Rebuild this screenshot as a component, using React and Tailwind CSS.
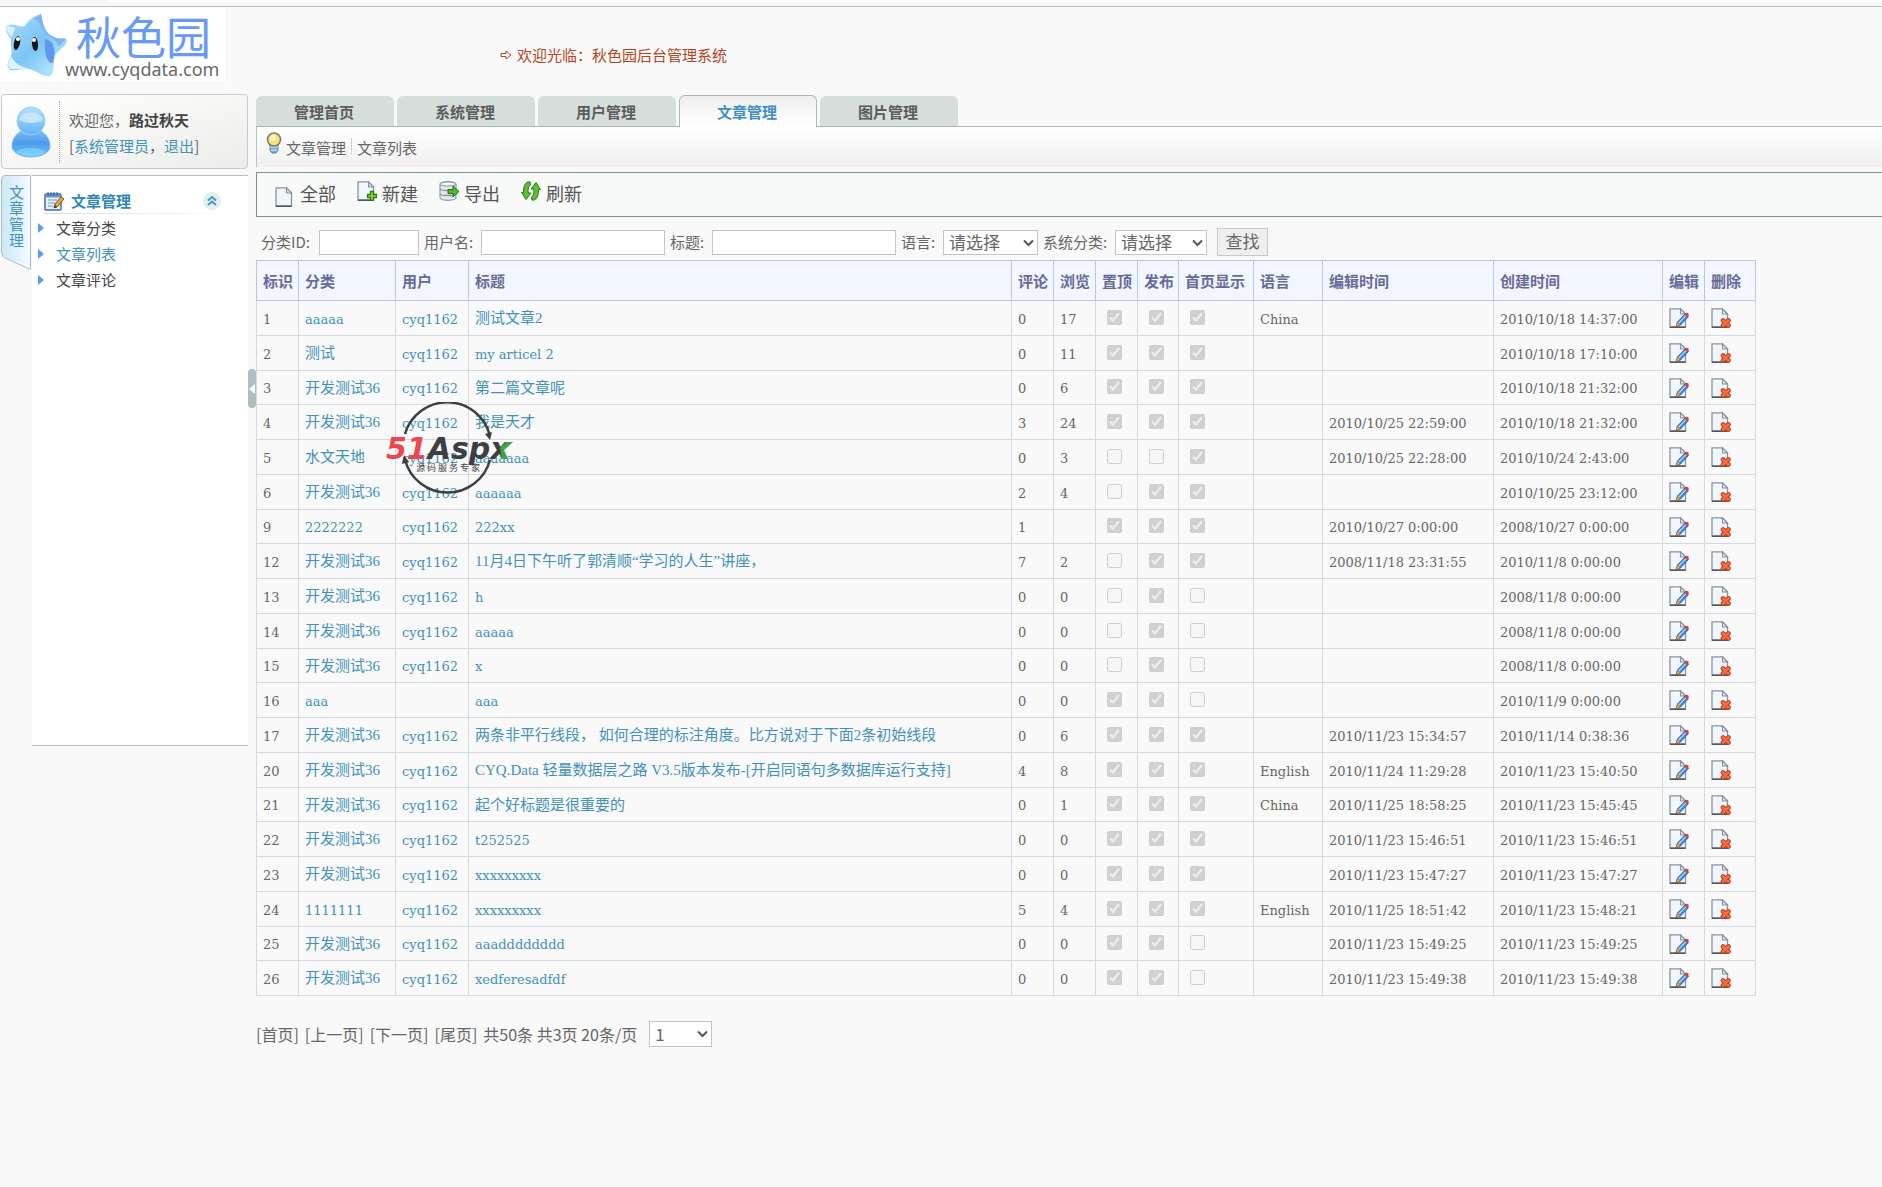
import React, { useState } from 'react';

const tabs = ['管理首页', '系统管理', '用户管理', '文章管理', '图片管理'];

const menuItems = ['文章分类', '文章列表', '文章评论'];

// top / pub / home are the three checkbox columns
const articles = [
    { id: 1, cat: 'aaaaa', user: 'cyq1162', title: '测试文章2', comments: '0', hits: '17', top: true, pub: true, home: true, lang: 'China', edited: '', created: '2010/10/18 14:37:00' },
    { id: 2, cat: '测试', user: 'cyq1162', title: 'my articel 2', comments: '0', hits: '11', top: true, pub: true, home: true, lang: '', edited: '', created: '2010/10/18 17:10:00' },
    { id: 3, cat: '开发测试36', user: 'cyq1162', title: '第二篇文章呢', comments: '0', hits: '6', top: true, pub: true, home: true, lang: '', edited: '', created: '2010/10/18 21:32:00' },
    { id: 4, cat: '开发测试36', user: 'cyq1162', title: '我是天才', comments: '3', hits: '24', top: true, pub: true, home: true, lang: '', edited: '2010/10/25 22:59:00', created: '2010/10/18 21:32:00' },
    { id: 5, cat: '水文天地', user: 'cyq1162', title: 'aaaaaaa', comments: '0', hits: '3', top: false, pub: false, home: true, lang: '', edited: '2010/10/25 22:28:00', created: '2010/10/24 2:43:00' },
    { id: 6, cat: '开发测试36', user: 'cyq1162', title: 'aaaaaa', comments: '2', hits: '4', top: false, pub: true, home: true, lang: '', edited: '', created: '2010/10/25 23:12:00' },
    { id: 9, cat: '2222222', user: 'cyq1162', title: '222xx', comments: '1', hits: '', top: true, pub: true, home: true, lang: '', edited: '2010/10/27 0:00:00', created: '2008/10/27 0:00:00' },
    { id: 12, cat: '开发测试36', user: 'cyq1162', title: '11月4日下午听了郭清顺“学习的人生”讲座，', comments: '7', hits: '2', top: false, pub: true, home: true, lang: '', edited: '2008/11/18 23:31:55', created: '2010/11/8 0:00:00' },
    { id: 13, cat: '开发测试36', user: 'cyq1162', title: 'h', comments: '0', hits: '0', top: false, pub: true, home: false, lang: '', edited: '', created: '2008/11/8 0:00:00' },
    { id: 14, cat: '开发测试36', user: 'cyq1162', title: 'aaaaa', comments: '0', hits: '0', top: false, pub: true, home: false, lang: '', edited: '', created: '2008/11/8 0:00:00' },
    { id: 15, cat: '开发测试36', user: 'cyq1162', title: 'x', comments: '0', hits: '0', top: false, pub: true, home: false, lang: '', edited: '', created: '2008/11/8 0:00:00' },
    { id: 16, cat: 'aaa', user: '', title: 'aaa', comments: '0', hits: '0', top: true, pub: true, home: false, lang: '', edited: '', created: '2010/11/9 0:00:00' },
    { id: 17, cat: '开发测试36', user: 'cyq1162', title: '两条非平行线段， 如何合理的标注角度。比方说对于下面2条初始线段', comments: '0', hits: '6', top: true, pub: true, home: true, lang: '', edited: '2010/11/23 15:34:57', created: '2010/11/14 0:38:36' },
    { id: 20, cat: '开发测试36', user: 'cyq1162', title: 'CYQ.Data 轻量数据层之路 V3.5版本发布-[开启同语句多数据库运行支持]', comments: '4', hits: '8', top: true, pub: true, home: true, lang: 'English', edited: '2010/11/24 11:29:28', created: '2010/11/23 15:40:50' },
    { id: 21, cat: '开发测试36', user: 'cyq1162', title: '起个好标题是很重要的', comments: '0', hits: '1', top: true, pub: true, home: true, lang: 'China', edited: '2010/11/25 18:58:25', created: '2010/11/23 15:45:45' },
    { id: 22, cat: '开发测试36', user: 'cyq1162', title: 't252525', comments: '0', hits: '0', top: true, pub: true, home: true, lang: '', edited: '2010/11/23 15:46:51', created: '2010/11/23 15:46:51' },
    { id: 23, cat: '开发测试36', user: 'cyq1162', title: 'xxxxxxxxx', comments: '0', hits: '0', top: true, pub: true, home: true, lang: '', edited: '2010/11/23 15:47:27', created: '2010/11/23 15:47:27' },
    { id: 24, cat: '1111111', user: 'cyq1162', title: 'xxxxxxxxx', comments: '5', hits: '4', top: true, pub: true, home: true, lang: 'English', edited: '2010/11/25 18:51:42', created: '2010/11/23 15:48:21' },
    { id: 25, cat: '开发测试36', user: 'cyq1162', title: 'aaadddddddd', comments: '0', hits: '0', top: true, pub: true, home: false, lang: '', edited: '2010/11/23 15:49:25', created: '2010/11/23 15:49:25' },
    { id: 26, cat: '开发测试36', user: 'cyq1162', title: 'xedferesadfdf', comments: '0', hits: '0', top: true, pub: true, home: false, lang: '', edited: '2010/11/23 15:49:38', created: '2010/11/23 15:49:38' },
];

const columns = [
    { label: '标识', width: 'w-[42px]' },
    { label: '分类', width: 'w-[97px]' },
    { label: '用户', width: 'w-[73px]' },
    { label: '标题', width: 'w-auto' },
    { label: '评论', width: 'w-[42px]' },
    { label: '浏览', width: 'w-[42px]' },
    { label: '置顶', width: 'w-[42px]' },
    { label: '发布', width: 'w-[41px]' },
    { label: '首页显示', width: 'w-[75px]' },
    { label: '语言', width: 'w-[69px]' },
    { label: '编辑时间', width: 'w-[171px]' },
    { label: '创建时间', width: 'w-[169px]' },
    { label: '编辑', width: 'w-[42px]' },
    { label: '删除', width: 'w-[51px]' },
];

const StarLogo = () => (
    <svg width="64" height="66" viewBox="0 0 64 66" aria-hidden="true" className="shrink-0">
        <defs>
            <linearGradient id="star" x1="0" y1="0" x2="1" y2="1">
                <stop offset="0" stopColor="#a9dcfa" />
                <stop offset="0.5" stopColor="#7cc4f6" />
                <stop offset="1" stopColor="#c9f3fd" />
            </linearGradient>
        </defs>
        <path d="M37 2C30 4 25 7 21 14C16 16 11 11 5 13C0 14 2 21 7 27C6 34 9 38 7 44C3 51 2 55 7 58C14 59 19 56 25 57C33 59 40 66 46 64C51 61 49 54 50 46C51 40 63 34 63 29C62 24 56 28 50 25C41 22 39 13 37 2Z" fill="url(#star)" />
        <path d="M37 2C39 13 41 22 50 25C54 28 58 26 62 27L55 34C51 26 43 24 38 16C36 11 34 8 30 7Z" fill="#7fb2f4" />
        <path d="M41 27C49 28 53 37 49 51C42 51 40 40 41 27Z" fill="#6197f4" />
        <path d="M5 14C1 15 3 21 8 25L11 16ZM7 44C3 51 3 56 8 57C14 58 19 56 25 57C16 54 10 51 7 44Z" fill="#d9f4fd" />
        <ellipse cx="13" cy="31" rx="3" ry="7" transform="rotate(12 13 31)" fill="#141414" />
        <ellipse cx="31" cy="32" rx="3" ry="7" transform="rotate(-6 31 32)" fill="#141414" />
        <circle cx="14" cy="27" r="2" fill="#fff" />
        <circle cx="30" cy="28" r="2" fill="#fff" />
    </svg>
);

const AvatarIcon = () => (
    <svg width="40" height="52" viewBox="0 0 40 52" aria-hidden="true">
        <defs>
            <linearGradient id="avatarHead" x1="0" y1="0" x2="0" y2="1">
                <stop offset="0" stopColor="#b5e1fb" />
                <stop offset="0.5" stopColor="#8ccaf8" />
                <stop offset="1" stopColor="#64b2f5" />
            </linearGradient>
            <linearGradient id="avatarBody" x1="0" y1="0" x2="0" y2="1">
                <stop offset="0" stopColor="#83c4f8" />
                <stop offset="0.5" stopColor="#4b9bec" />
                <stop offset="1" stopColor="#6cc9fb" />
            </linearGradient>
        </defs>
        <path d="M1 41C1 30 9 23 20 23C31 23 39 30 39 41C38 47 30 51 20 51C10 51 2 47 1 41Z" fill="url(#avatarBody)" stroke="#78b8ec" />
        <ellipse cx="20" cy="46" rx="14" ry="4" fill="#8be0fd" opacity="0.5" />
        <circle cx="20" cy="15" r="14" fill="url(#avatarHead)" stroke="#9bcdf0" />
        <path d="M8 14C10 4 30 4 32 14C25 18 15 18 8 14Z" fill="#d5effd" opacity="0.7" />
    </svg>
);

const NoteIcon = () => (
    <svg width="20" height="20" viewBox="0 0 20 20" aria-hidden="true">
        <rect x="1" y="3" width="16" height="16" rx="1" fill="#eaf2fd" stroke="#4268ae" strokeWidth="1.5" />
        <path d="M1 5h16" stroke="#6b94d6" strokeWidth="3" />
        <path d="M4 1v4M7 1v4M10 1v4M13 1v4" stroke="#35599f" />
        <path d="M4 9h9M4 12h7M4 15h5" stroke="#6c94d8" />
        <path d="M10 17L11 13L17 6L20 8L13 16Z" fill="#e8a63a" stroke="#8a5419" />
        <path d="M10 17L11 14L13 16Z" fill="#333" />
    </svg>
);

const CollapseIcon = () => (
    <svg width="20" height="20" viewBox="0 0 20 20" aria-hidden="true">
        <circle cx="10" cy="10" r="9" fill="#e3f0e7" />
        <path d="M6 9.5L10 6L14 9.5M6 14L10 10.5L14 14" fill="none" stroke="#4798c4" strokeWidth="2" />
    </svg>
);

const BulbIcon = () => (
    <svg width="16" height="22" viewBox="0 0 16 22" aria-hidden="true">
        <path d="M4 12h8v6l-2 3H6l-2-3Z" fill="#7ab0d8" stroke="#5b7f9c" />
        <path d="M4 15h8M5 18h6" stroke="#d5e9f6" />
        <circle cx="8" cy="7.5" r="6.5" fill="#f6e27a" stroke="#84796a" strokeWidth="1.5" />
        <circle cx="7" cy="6" r="3" fill="#fdf6bd" />
    </svg>
);

// shared sheet of paper, the small icons are drawn on top of it
const PageIcon = ({ children }) => (
    <svg width="20" height="20" viewBox="0 0 20 20" aria-hidden="true">
        <path d="M1 .8h10.500L16.500 6v13.2H1Z" fill="#f1f6fc" stroke="#8a929e" strokeWidth="1.3" />
        <path d="M1 19.200h15.500" stroke="#4c535c" strokeWidth="1.5" />
        <path d="M11.500 .8V6h5Z" fill="#dde4ee" stroke="#8a929e" strokeWidth="1.1" />
        {children}
    </svg>
);

const AddIcon = () => (
    <PageIcon>
        <path d="M10.500 13.500h3v-3h3v3h3v3h-3v3h-3v-3h-3Z" fill="#8fd83a" stroke="#2f7d12" strokeWidth="1.3" />
    </PageIcon>
);

const EditIcon = () => (
    <PageIcon>
        <path d="M7 19L8.500 14L16.500 5.500L19.500 8.500L11.500 17Z" fill="#3f83e0" stroke="#2c549b" strokeWidth="0.8" />
        <path d="M8.800 15L16.500 7L17.500 8L10 16Z" fill="#a8d1fb" />
        <path d="M15.500 6.500L17 5C18.500 4 20.500 6 19.500 7.500L18.300 9.200Z" fill="#d8403c" />
        <path d="M7 19L8.500 14.200L11.400 17Z" fill="#edb55a" stroke="#8a6021" strokeWidth="0.6" />
    </PageIcon>
);

const DeleteIcon = () => (
    <PageIcon>
        <path d="M12 12.500L17.500 17.500M17.500 12.500L12 17.500" fill="none" stroke="#c43a17" strokeWidth="4.600" strokeLinecap="round" />
        <path d="M12 12.500L17.500 17.500M17.500 12.500L12 17.500" fill="none" stroke="#f27048" strokeWidth="2.600" strokeLinecap="round" />
    </PageIcon>
);

const ExportIcon = () => (
    <svg width="20" height="20" viewBox="0 0 20 20" aria-hidden="true">
        <path d="M1 3C1 0 17 0 17 3V17C17 20 1 20 1 17Z" fill="#e3e9f0" stroke="#858e9a" />
        <ellipse cx="9" cy="3" rx="8" ry="2" fill="#f8fafc" stroke="#858e9a" />
        <path d="M1 8C1 10 17 10 17 8M1 13C1 15 17 15 17 13" fill="none" stroke="#858e9a" strokeWidth="1.3" />
        <path d="M9 8.500h5V5l6 5.500L14 16v-3.500H9Z" fill="#58b52b" stroke="#267010" />
    </svg>
);

const RefreshIcon = () => (
    <svg width="20" height="20" viewBox="0 0 20 20" aria-hidden="true">
        <path d="M9 .8C4.500 .8 2.500 4 2.500 11.500H.6L5 18.500L10 12H7.300C6.800 8 7 5 9.500 4Z" fill="#62bd32" stroke="#2c7a14" />
        <path d="M11 19.200C15.500 19.200 17.500 16 17.500 8.500H19.400L15 1.500L10 8H12.700C13.200 12 13 15 10.500 16Z" fill="#62bd32" stroke="#2c7a14" />
    </svg>
);

const toolbar = [
    { label: '全部', icon: <PageIcon />, align: 'pt-[8px]' },
    { label: '新建', icon: <AddIcon />, align: 'pb-[4px]' },
    { label: '导出', icon: <ExportIcon />, align: 'pb-[4px]' },
    { label: '刷新', icon: <RefreshIcon />, align: 'pb-[4px]' },
];

const Watermark = () => (
    <svg className="absolute left-[130px] top-[142px] pointer-events-none" width="128" height="94" viewBox="0 0 128 94" aria-label="51Aspx">
        <path d="M19 32A44 44 0 0 1 104 34M104 58A44 44 0 0 1 19 58" fill="none" stroke="#3d3f42" strokeWidth="2.500" />
        <path d="M99 32L106 30L104 38ZM16 62L18 53L23 60Z" fill="#3d3f42" />
        <text x="0" y="57" fontSize="30" fontWeight="bold" fontStyle="italic" fontFamily="DejaVu Sans, sans-serif">
            <tspan fill="#ef4550">51</tspan>
            <tspan fill="#3d3f42">Aspx</tspan>
        </text>
        <path d="M114 46L120 40H127L118 48L122 57H116Z" fill="#39a544" />
        <text x="30" y="69" fontSize="9" fill="#3d3f42" fontFamily="Noto Sans CJK SC, sans-serif">源 码 服 务 专 家</text>
    </svg>
);

const Select = ({ className, options, ...props }) => (
    <span className="relative inline-flex">
        <select {...props} className={`${className} pl-[5px] appearance-none bg-white border border-[#c4c4c4] text-[17px] leading-5`}>
            {options.map((option) => <option key={option}>{option}</option>)}
        </select>
        <svg className="absolute right-[4px] top-[9px] pointer-events-none" width="11" height="8" viewBox="0 0 11 8" aria-hidden="true">
            <path d="M1 1.500L5.500 6L10 1.500" fill="none" stroke="#555" strokeWidth="2" />
        </svg>
    </span>
);

const Cell = ({ text, link }) => {
    const hasCjk = /[\u4e00-\u9fff]/.test(text);
    return (
        <td className={`border border-[#d3d9df] px-[6px] whitespace-nowrap ${hasCjk ? "text-[15px] font-['Liberation_Serif','Noto_Sans_CJK_SC',serif]" : "pt-[3px] text-[13px] font-['DejaVu_Serif',serif]"}`}>
            {link ? <a href="#" className="text-[#4292b8] hover:underline">{text}</a> : text}
        </td>
    );
};

const CheckCell = ({ checked, label }) => (
    <td className="border border-[#d3d9df] pl-[11px] pb-[2px]">
        <input type="checkbox" checked={checked} disabled readOnly aria-label={label} className="block w-[15px] h-[15px]" />
    </td>
);

const Sidebar = () => (
    <aside className="w-[248px] shrink-0">
        <div className="flex items-center h-[75px] ml-px border border-[#c6cbca] rounded bg-linear-to-br from-white via-[#f6f6f4] to-[#ececea]">
            <div className="w-[58px] h-[62px] flex items-center justify-center border-r border-dotted border-[#a5a5a5]">
                <AvatarIcon />
            </div>
            <div className="pl-[9px] pt-[2px] leading-[26px]">
                <p>欢迎您，<b className="text-[#444]">路过秋天</b></p>
                <p>[<a href="#" className="text-[#4292b8]">系统管理员</a>，<a href="#" className="text-[#4292b8]">退出</a>]</p>
            </div>
        </div>

        <div className="flex items-start mt-[6px]">
            <div className="relative w-[32px] h-[96px]">
                <svg className="absolute inset-0" width="32" height="96" viewBox="0 0 32 96" aria-hidden="true">
                    <defs>
                        <linearGradient id="sideTab" x1="0" y1="0" x2="1" y2="0">
                            <stop offset="0" stopColor="#cbe8f8" />
                            <stop offset="1" stopColor="#f4fbff" />
                        </linearGradient>
                    </defs>
                    <path d="M30.500 .5H5.500Q1.500 .5 1.500 5V76Q1.500 82 7 84L30.500 94.500Z" fill="url(#sideTab)" stroke="#adbdc2" />
                </svg>
                <a href="#" className="relative block w-4 ml-[9px] pt-[9px] leading-4 text-[#3e92c4]">文章管理</a>
            </div>
            <nav className="flex-1 h-[571px] bg-white border-y border-[#b9c0c0]">
                <div className="flex items-center h-[36px] mx-3 pt-[14px]">
                    <NoteIcon />
                    <h2 className="flex-1 ml-[7px] font-bold text-[#2f86b7]">文章管理</h2>
                    <button type="button" aria-label="收起" className="mr-[14px]"><CollapseIcon /></button>
                </div>
                <div className="h-px mx-3 mt-px mb-px bg-linear-to-r from-[#d5dada] to-white" />
                <ul>
                    {menuItems.map((item) => (
                        <li key={item} className="flex items-center h-[26px] pl-[6px]">
                            <svg width="6" height="10" viewBox="0 0 6 10" aria-hidden="true"><path d="M0 0L6 5L0 10Z" fill="#5a9bf5" /></svg>
                            <a href="#" className={item === '文章列表' ? 'ml-3 text-[#4292b8]' : 'ml-3 text-[#444]'}>{item}</a>
                        </li>
                    ))}
                </ul>
            </nav>
        </div>
    </aside>
);

const SearchForm = () => (
    <form className="flex items-center h-[43px] pl-[5px] pt-[7px] whitespace-nowrap" onSubmit={(e) => e.preventDefault()}>
        <label htmlFor="catId" className="w-[58px]">分类ID:</label>
        <input id="catId" type="text" className="w-[100px] h-[25px] mr-[5px] px-1 bg-white border border-[#c4c4c4]" />
        <label htmlFor="userName" className="w-[57px]">用户名:</label>
        <input id="userName" type="text" className="w-[184px] h-[25px] mr-[5px] px-1 bg-white border border-[#c4c4c4]" />
        <label htmlFor="title" className="w-[42px]">标题:</label>
        <input id="title" type="text" className="w-[184px] h-[25px] mr-[5px] px-1 bg-white border border-[#c4c4c4]" />
        <label htmlFor="lang" className="w-[42px]">语言:</label>
        <Select id="lang" className="w-[95px] h-[25px]" options={['请选择']} />
        <label htmlFor="sysCat" className="w-[72px] ml-[5px]">系统分类:</label>
        <Select id="sysCat" className="w-[92px] h-[25px]" options={['请选择']} />
        <button type="submit" className="w-[51px] h-[28px] ml-[10px] pb-[2px] bg-[#efefef] border border-[#c8c8c8] text-[17px] leading-5">查找</button>
    </form>
);

const App = () => {
    const [activeTab, setActiveTab] = useState('文章管理');

    return (
        <div className="min-h-screen bg-[#f9f9f9] text-[15px] leading-5 text-[#666] font-['Noto_Sans_CJK_SC',sans-serif]">
            <div className="h-[7px] pl-[107px] bg-[#f5f6f7] border-b border-[#bfc1c3]">
                <div className="h-[2px] bg-white rounded-bl" />
            </div>
            <header className="flex h-[87px] pt-px">
                <div className="flex w-[225px] h-[73px] pl-[4px] pt-1 bg-white">
                    <StarLogo />
                    <div className="-ml-[3px] whitespace-nowrap">
                        <div className="pl-[11px] text-[45px] leading-[48px] text-[#6699f8]">秋色园</div>
                        <div className="-mt-px text-[18px] leading-5 text-[#686868] font-['Noto_Sans',sans-serif]">www.cyqdata.com</div>
                    </div>
                </div>
                <p className="flex items-center gap-[5px] h-[94px] ml-[275px] text-[#b5451f]">
                    <svg width="12" height="10" viewBox="0 0 12 10" aria-hidden="true"><path d="M1 3.500h5V1l5 4-5 4V6.500H1Z" fill="none" stroke="#b5451f" /></svg>
                    欢迎光临：秋色园后台管理系统
                </p>
            </header>

            <div className="flex items-start">
                <Sidebar />
                <button type="button" aria-label="隐藏菜单" className="flex items-center justify-center w-2 h-[39px] mt-[275px] shrink-0 rounded bg-[#adc0bf]">
                    <svg width="6" height="10" viewBox="0 0 6 10" aria-hidden="true"><path d="M6 0L0 5L6 10Z" fill="#fff" /></svg>
                </button>

                <main className="flex-1 min-w-0 pt-px">
                    <div className="flex items-end gap-[3px] h-[32px] border-b border-[#a9b9b7]">
                        {tabs.map((tab) => (
                            <button
                                key={tab}
                                type="button"
                                onClick={() => setActiveTab(tab)}
                                className={`w-[138px] pr-[2px] rounded-t-md font-bold ${tab === activeTab
                                    ? 'h-[32px] -mb-px border border-b-0 border-[#a9b9b7] bg-linear-to-b from-[#eeeeee] to-white text-[#3e8fc4]'
                                    : 'h-[30px] pt-px bg-[#d6dedb] text-[#5c5c5c]'
                                    }`}
                            >
                                {tab}
                            </button>
                        ))}
                    </div>
                    <div className="flex items-start h-[40px] pl-[9px] pt-[5px] border-l border-[#b5c1c0] bg-linear-to-b from-white to-[#f0f0f0]">
                        <BulbIcon />
                        <a href="#" className="mt-[6px] ml-[4px]">文章管理</a>
                        <span className="w-px h-[16px] mt-[6px] mx-[5px] bg-[#cfcfcf]" />
                        <a href="#" className="mt-[6px]">文章列表</a>
                    </div>

                    <div className="flex items-center gap-[21px] h-[45px] mt-[5px] pl-[18px] pb-[3px] border border-r-0 border-[#7f9391] bg-[#f8f9f9]">
                        {toolbar.map((tool) => (
                            <button key={tool.label} type="button" className="flex items-center gap-[5px] w-[61px] text-lg leading-5 text-[#555] whitespace-nowrap">
                                <span className={`w-5 shrink-0 ${tool.align}`}>{tool.icon}</span>
                                {tool.label}
                            </button>
                        ))}
                    </div>

                    <SearchForm />

                    <div className="relative mr-[126px]">
                        <table className="w-full table-fixed border-collapse text-left">
                            <thead>
                                <tr className="h-[40px] bg-[#f2f6fe] text-[#666b99]">
                                    {columns.map((col) => (
                                        <th key={col.label} className={`${col.width} border border-[#b3c8e4] pl-[6px] font-bold whitespace-nowrap`}>{col.label}</th>
                                    ))}
                                </tr>
                            </thead>
                            <tbody>
                                {articles.map((a) => (
                                    <tr key={a.id} className="h-[35px] nth-[4n+3]:h-[34px]">
                                        <Cell text={String(a.id)} />
                                        <Cell text={a.cat} link />
                                        <Cell text={a.user} link />
                                        <Cell text={a.title} link />
                                        <Cell text={a.comments} />
                                        <Cell text={a.hits} />
                                        <CheckCell checked={a.top} label="置顶" />
                                        <CheckCell checked={a.pub} label="发布" />
                                        <CheckCell checked={a.home} label="首页显示" />
                                        <Cell text={a.lang} />
                                        <Cell text={a.edited} />
                                        <Cell text={a.created} />
                                        <td className="border border-[#d3d9df] pl-[6px]">
                                            <a href="#" aria-label="编辑" className="block w-5"><EditIcon /></a>
                                        </td>
                                        <td className="border border-[#d3d9df] pl-[6px]">
                                            <a href="#" aria-label="删除" className="block w-5"><DeleteIcon /></a>
                                        </td>
                                    </tr>
                                ))}
                            </tbody>
                        </table>
                        <Watermark />
                    </div>

                    <div className="flex items-center gap-[6px] h-[26px] mt-[25px] text-base leading-5 whitespace-nowrap">
                        <a href="#">[首页]</a>
                        <a href="#">[上一页]</a>
                        <a href="#">[下一页]</a>
                        <a href="#">[尾页]</a>
                        <span className="mr-[6px]">共50条 共3页 20条/页</span>
                        <Select aria-label="页码" className="w-[63px] h-[26px]" options={['1', '2', '3']} />
                    </div>
                </main>
            </div>
        </div>
    );
};

export default App;
